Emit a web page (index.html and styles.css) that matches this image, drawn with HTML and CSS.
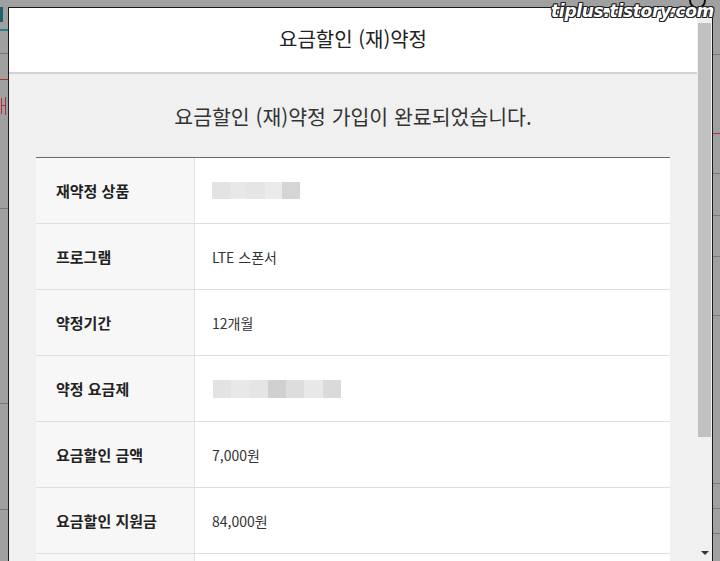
FILE: index.html
```html
<!DOCTYPE html>
<html lang="ko">
  <head>
    <meta charset="UTF-8" />
    <meta name="viewport" content="width=device-width, initial-scale=1.0" />
    <title>요금할인 (재)약정</title>
    <link rel="stylesheet" href="styles.css">
  </head>
  <body>
    <div class="screen">
      <div class="side side-left"></div>
      <div class="modal">
        <div class="modal-main">
          <div class="modal-head"><h1>요금할인 (재)약정</h1></div>
          <div class="modal-body">
            <h2>요금할인 (재)약정 가입이 완료되었습니다.</h2>
            <div class="info">
              <div class="row">
                <div class="label">재약정 상품</div>
                <div class="value">
                  <div class="blur short">
                    <span class="b1"></span><span class="b2"></span><span class="b3"></span><span class="b4"></span><span class="b5"></span>
                  </div>
                </div>
              </div>
              <div class="row">
                <div class="label">프로그램</div>
                <div class="value">LTE 스폰서</div>
              </div>
              <div class="row">
                <div class="label">약정기간</div>
                <div class="value">12개월</div>
              </div>
              <div class="row">
                <div class="label">약정 요금제</div>
                <div class="value">
                  <div class="blur long">
                    <span class="b1"></span><span class="b2"></span><span class="b3"></span><span class="b6"></span><span class="b7"></span><span class="b2"></span><span class="b8"></span>
                  </div>
                </div>
              </div>
              <div class="row">
                <div class="label">요금할인 금액</div>
                <div class="value">7,000원</div>
              </div>
              <div class="row">
                <div class="label">요금할인 지원금</div>
                <div class="value">84,000원</div>
              </div>
              <div class="row">
                <div class="label"></div>
                <div class="value"></div>
              </div>
            </div>
          </div>
        </div>
        <div class="scroll">
          <div class="thumb"></div>
          <div class="arrow"></div>
        </div>
      </div>
      <div class="side side-right"></div>
    </div>
    <span class="ring"></span>
    <div class="watermark">tiplus.tistory.com</div>
  </body>
</html>
```

FILE: styles.css
```css
* {
  box-sizing: border-box;
}

body {
  margin: 0;
  width: 720px;
  height: 561px;
  overflow: hidden;
  position: relative;
  background-color: #a0a0a0;
  font-family: "Noto Sans CJK KR", "Noto Sans", sans-serif;
  color: #222;
}

.screen {
  display: flex;
  height: 561px;
}

.side {
  flex: none;
  overflow: hidden;
}

/* bits of the page that peek out behind the dialog */
.side-left {
  width: 8px;
  background:
    linear-gradient(#1f6270, #1f6270) 0 7px / 3px 15px no-repeat,
    linear-gradient(#2a8090, #2a8090) 0 29px / 100% 2px no-repeat,
    linear-gradient(#767676, #767676) 0 53px / 100% 1px no-repeat,
    linear-gradient(#b03030, #b03030) 0 79px / 100% 1px no-repeat,
    linear-gradient(#b03030, #b03030) 1px 98px / 1px 16px no-repeat,
    linear-gradient(#b03030, #b03030) 5px 97px / 1px 18px no-repeat,
    linear-gradient(#b03030, #b03030) 1px 105px / 4px 1px no-repeat,
    linear-gradient(#7a7a7a, #7a7a7a) 0 208px / 100% 1px no-repeat,
    linear-gradient(#7a7a7a, #7a7a7a) 0 403px / 100% 1px no-repeat,
    linear-gradient(#7a7a7a, #7a7a7a) 0 509px / 100% 1px no-repeat,
    #a0a0a0;
}

.side-right {
  width: 7px;
  background:
    linear-gradient(#7a7a7a, #7a7a7a) 0 54px / 100% 1px no-repeat,
    linear-gradient(#b03030, #b03030) 0 133px / 100% 1px no-repeat,
    linear-gradient(#7a7a7a, #7a7a7a) 0 173px / 100% 1px no-repeat,
    linear-gradient(#7a7a7a, #7a7a7a) 0 215px / 100% 1px no-repeat,
    linear-gradient(#7a7a7a, #7a7a7a) 0 256px / 100% 1px no-repeat,
    linear-gradient(#7a7a7a, #7a7a7a) 0 315px / 100% 1px no-repeat,
    linear-gradient(#7a7a7a, #7a7a7a) 0 483px / 100% 1px no-repeat,
    linear-gradient(#7a7a7a, #7a7a7a) 0 508px / 100% 1px no-repeat,
    linear-gradient(#7a7a7a, #7a7a7a) 0 533px / 100% 1px no-repeat,
    #a0a0a0;
}

.modal {
  position: relative;
  z-index: 1;
  display: flex;
  width: 705px;
  height: 554px;
  margin-top: 7px;
  border: 1px solid #1a1a1a;
  border-bottom: none;
  background-color: #f0f0f0;
}

.modal-main {
  flex: 1;
  overflow: hidden;
}

.modal-head {
  height: 66px;
  background-color: #fff;
  border-bottom: 2px solid #d2d2d2;
}

.modal-head h1 {
  margin: 0;
  font-size: 20px;
  font-weight: 400;
  line-height: 62px;
  text-align: center;
  color: #222;
}

.modal-body {
  padding: 29px 27px 0;
}

.modal-body h2 {
  margin: 0 0 28px;
  font-size: 20.5px;
  font-weight: 400;
  line-height: 26px;
  text-align: center;
  color: #333;
}

.info {
  border-top: 1px solid #6a6a6a;
}

.row {
  display: flex;
  height: 66px;
  border-bottom: 1px solid #dedede;
}

.label {
  display: flex;
  align-items: center;
  width: 159px;
  padding-left: 20px;
  background-color: #f7f7f7;
  border-right: 1px solid #e2e2e2;
  font-size: 15px;
  font-weight: 700;
  color: #222;
}

.value {
  display: flex;
  flex: 1;
  align-items: center;
  padding-left: 17px;
  background-color: #fff;
  font-size: 14px;
  color: #333;
}

.blur {
  display: flex;
  height: 17px;
}

.blur.long {
  margin-left: 1px;
  height: 18px;
}

.blur span {
  width: 17.5px;
  height: 100%;
}

.blur.long span {
  width: 18.3px;
}

.b1 { background-color: #e3e3e3; }
.b2 { background-color: #e8e8e8; }
.b3 { background-color: #e5e5e5; }
.b4 { background-color: #ebebeb; }
.b5 { background-color: #d5d5d5; }
.b6 { background-color: #d0d0d0; }
.b7 { background-color: #dddddd; }
.b8 { background-color: #dadada; }

.scroll {
  display: flex;
  flex-direction: column;
  align-items: center;
  width: 15px;
  padding: 15px 0 6px;
  background-color: #f0f0f0;
}

.thumb {
  width: 13px;
  height: 414px;
  background-color: #c1c1c1;
}

.arrow {
  margin-top: auto;
  width: 0;
  height: 0;
  border-left: 4px solid transparent;
  border-right: 4px solid transparent;
  border-top: 4px solid #333;
}

.ring {
  position: absolute;
  top: -8px;
  left: 689px;
  width: 17px;
  height: 17px;
  border: 2px solid #111;
  border-radius: 50%;
}

.watermark {
  position: absolute;
  z-index: 2;
  top: 1px;
  right: 6px;
  font-family: "DejaVu Sans", sans-serif;
  font-size: 17px;
  font-style: italic;
  font-weight: 700;
  letter-spacing: -0.3px;
  color: #fff;
  text-shadow:
    1px 0 0 #222, -1px 0 0 #222, 0 1px 0 #222, 0 -1px 0 #222,
    1px 1px 0 #222, -1px -1px 0 #222, 1px -1px 0 #222, -1px 1px 0 #222;
}
```
